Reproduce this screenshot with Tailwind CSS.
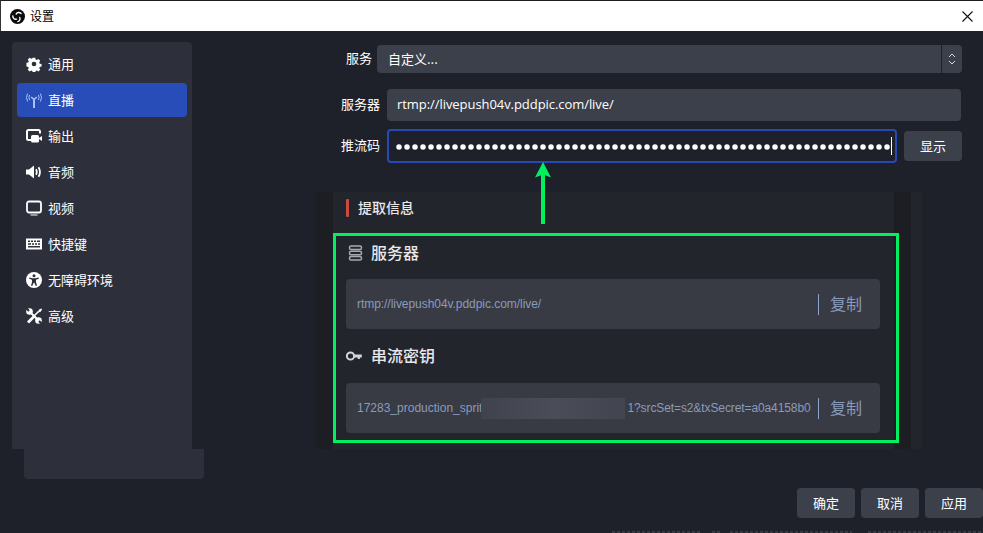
<!DOCTYPE html>
<html lang="zh">
<head>
<meta charset="utf-8">
<script src="https://cdn.jsdelivr.net/npm/@tailwindcss/browser@4"></script>
</head>
<body class="bg-[#1f212a]">
<div class="relative w-[983px] h-[533px] overflow-hidden flex flex-col bg-[#1f212a] text-white text-[13px] font-['Noto_Sans_CJK_SC','Noto_Sans',sans-serif]">
  <header class="h-[31px] shrink-0 bg-white border-t border-t-[#1f1f1f] border-l border-l-[#333] flex items-center text-black">
    <svg class="w-[15px] h-[15px] ml-[9px]" viewBox="0 0 16 16"><circle cx="8" cy="8" r="8" fill="#0c0c0c"/><g fill="none" stroke="#fff" stroke-linecap="round"><path d="M6.600 5.400A3.200 3.200 0 0 1 11.800 4.800" stroke-width="1.500"/><path d="M10.400 9A3.200 3.200 0 0 1 8.400 13.400" stroke-width="1.500"/><path d="M7 10.800A3.200 3.200 0 0 1 3 7.400" stroke-width="1.500"/></g></svg>
    <span class="ml-[5px] text-[12px]">设置</span>
    <svg class="w-[11px] h-[11px] ml-auto mr-[10px]" viewBox="0 0 11 11"><path d="M.5.5l10 10M10.500.5l-10 10" stroke="#111" stroke-width="1.100"/></svg>
  </header>
  <div class="flex-1 flex min-h-0">
    <aside class="w-[316px] shrink-0 pl-[12px] pt-[11px] flex flex-col">
      <nav class="w-[180px] h-[407px] bg-[#2d2f3b] rounded-t-[4px] px-[5px] pt-[5px] flex flex-col">
        <div class="h-[34px] mb-[2px] flex items-center pl-[9px] gap-[6px]">
          <svg class="w-[16px] h-[16px]" viewBox="0 0 16 16"><path fill="#fff" fill-rule="evenodd" d="M6.600 1h2.800l.4 2 1.300.6 1.800-1.100 2 2-1.100 1.800.6 1.300 2 .4v2.800l-2 .4-.6 1.300 1.100 1.800-2 2-1.800-1.100-1.300.6-.4 2H6.600l-.4-2-1.300-.6-1.800 1.100-2-2 1.100-1.800-.6-1.300-2-.4V6.600l2-.4.6-1.300-1.100-1.800 2-2 1.800 1.100 1.300-.6zM8 5.400a2.600 2.600 0 1 0 0 5.200a2.600 2.600 0 0 0 0-5.200z" transform="translate(.8 .8) scale(.9)"/></svg>
          <span class="pb-px">通用</span>
        </div>
        <div class="h-[34px] mb-[2px] flex items-center pl-[9px] gap-[6px] bg-[#284cb8] rounded-[4px]">
          <svg class="w-[16px] h-[16px]" viewBox="0 0 16 16" fill="none" stroke="#a9c1f5" stroke-width="1"><path d="M8 7v9" stroke-width="2"/><path d="M5.200 5l2.800 2.500L10.800 5" stroke-width="1.600"/><path d="M3.600 3Q2.200 5.500 3.600 8M1.600 1.500Q-.6 5.500 1.600 9.500M12.400 3Q13.800 5.500 12.400 8M14.400 1.500Q16.600 5.500 14.400 9.500"/></svg>
          <span class="pb-px">直播</span>
        </div>
        <div class="h-[34px] mb-[2px] flex items-center pl-[9px] gap-[6px]">
          <svg class="w-[16px] h-[16px]" viewBox="0 0 16 16" fill="none"><path d="M5 12H2.500A1.500 1.500 0 0 1 1 10.500v-7A1.500 1.500 0 0 1 2.500 2h10A1.500 1.500 0 0 1 14 3.500V5.500" stroke="#fff" stroke-width="2"/><rect x="5" y="7" width="8" height="7.500" rx="1.500" fill="#fff"/><path d="M13 10l3-2v5l-3-2z" fill="#fff"/></svg>
          <span class="pb-px">输出</span>
        </div>
        <div class="h-[34px] mb-[2px] flex items-center pl-[9px] gap-[6px]">
          <svg class="w-[16px] h-[16px]" viewBox="0 0 16 16" fill="none"><path d="M0 5.500h3L8 1.500v13l-5-4H0z" fill="#fff"/><path d="M10 5.200q1.600 2.800 0 5.600M12.500 3.200q3 4.800 0 9.600" stroke="#fff" stroke-width="1.800"/></svg>
          <span class="pb-px">音频</span>
        </div>
        <div class="h-[34px] mb-[2px] flex items-center pl-[9px] gap-[6px]">
          <svg class="w-[16px] h-[16px]" viewBox="0 0 16 16" fill="none"><rect x="1" y="1.500" width="14" height="11" rx="2" stroke="#fff" stroke-width="1.800"/><path d="M4.500 15h7" stroke="#fff" stroke-width="1"/></svg>
          <span class="pb-px">视频</span>
        </div>
        <div class="h-[34px] mb-[2px] flex items-center pl-[9px] gap-[6px]">
          <svg class="w-[16px] h-[16px]" viewBox="0 0 16 16"><path fill="#fff" fill-rule="evenodd" d="M0 2.500h16v11H0zM2 4.500v1.500h2V4.500zm3 0v1.500h2V4.500zm3 0v1.500h2V4.500zm3 0v1.500h3V4.500zM2 7.200v1.500h3V7.200zm4 0v1.500h2V7.200zm3 0v1.500h2V7.200zm3 0v1.500h2V7.200zM2 10v1.500h12V10z"/></svg>
          <span class="pb-px">快捷键</span>
        </div>
        <div class="h-[34px] mb-[2px] flex items-center pl-[9px] gap-[6px]">
          <svg class="w-[16px] h-[16px]" viewBox="0 0 16 16"><circle cx="8" cy="8" r="8" fill="#fff"/><circle cx="8" cy="3.800" r="1.500" fill="#2d2f3b"/><path d="M3.500 5.600l3 .6h3l3-.6.3 1.200-2.800 1v2.400l1 3.400-1.200.4-1.500-3.200h-.6l-1.500 3.200-1.200-.4 1-3.400V7.800l-2.800-1z" fill="#2d2f3b"/></svg>
          <span class="pb-px">无障碍环境</span>
        </div>
        <div class="h-[34px] flex items-center pl-[9px] gap-[6px]">
          <svg class="w-[16px] h-[16px]" viewBox="0 0 16 16" fill="none"><path d="M3.500 3.500l9 9" stroke="#fff" stroke-width="2"/><path d="M2 14.500L9 7.500" stroke="#fff" stroke-width="2.800"/><path d="M8 8l4.500-4.500" stroke="#fff" stroke-width="1.600"/><path d="M12 4l1-2.500 2.500-1 .5.500-1 2.500-2.500 1z" fill="#fff"/><circle cx="3.500" cy="3.500" r="3.300" fill="#fff"/><path d="M3 3L0 0" stroke="#2d2f3b" stroke-width="2.200"/><circle cx="12.500" cy="12.500" r="3.300" fill="#fff"/><path d="M13 13l3 3" stroke="#2d2f3b" stroke-width="2.200"/></svg>
          <span class="pb-px">高级</span>
        </div>
      </nav>
      <div class="w-[180px] h-[30px] ml-[12px] bg-[#2d2f3b] rounded-b-[4px]"></div>
    </aside>
    <main class="flex-1 min-w-0 flex flex-col">
      <div class="flex items-center h-[28px] mt-[14px] pl-[30px]">
        <span class="w-[31px] pb-[2px]">服务</span>
        <div class="w-[564px] h-[28px] bg-[#3c404b] rounded-l-[4px] flex items-center pl-[11px]">自定义...</div>
        <div class="w-[20px] h-[28px] ml-px bg-[#3c404b] rounded-r-[4px] flex items-center justify-center">
          <svg class="w-[8px] h-[14px]" viewBox="0 0 8 14" fill="none" stroke="#d8d8d8"><path d="M1 5l3-3 3 3M1 9l3 3 3-3"/></svg>
        </div>
      </div>
      <div class="flex items-center h-[32px] mt-[16px] pl-[25px]">
        <span class="w-[46px] pb-[2px]">服务器</span>
        <div class="w-[574px] h-[32px] bg-[#3c404b] rounded-[4px] flex items-center pl-[10px]">
          <span class="font-['Open_Sans',sans-serif] text-[13px] tracking-[-0.06px]">rtmp://livepush04v.pddpic.com/live/</span>
        </div>
      </div>
      <div class="flex items-center h-[34px] mt-[8px] pl-[25px]">
        <span class="w-[46px] pb-[2px]">推流码</span>
        <div class="w-[510px] h-[34px] border-2 border-[#2749b5] rounded-[4px] flex items-center pl-[7px] overflow-hidden">
          <svg class="shrink-0 mt-[2px]" width="494" height="6" viewBox="0 0 494 6"><line x1="3" y1="3" x2="492" y2="3" stroke="#fff" stroke-width="5.500" stroke-linecap="round" stroke-dasharray="0 8"/></svg>
          <span class="w-px h-[18px] bg-white ml-px shrink-0"></span>
        </div>
        <div class="w-[58px] h-[30px] ml-[7px] bg-[#3c404b] rounded-[4px] flex items-center justify-center">显示</div>
      </div>
      <section class="w-[606px] h-[257px] mt-[29px] bg-[#23252d] flex">
        <div class="w-[17px] bg-[#1c1e24] shrink-0"></div>
        <div class="w-[561px] shrink-0 flex flex-col">
          <div class="h-[41px] flex items-center pl-[13px] gap-[9px] pb-[10px]">
            <span class="w-[3px] h-[18px] bg-[#cb4a42] rounded-[1px]"></span>
            <span class="text-[14px] font-medium text-[#e8e8ea]">提取信息</span>
          </div>
          <div class="relative z-10 w-[566px] h-[210px] border-[3px] border-[#00f060] pl-[10px] pr-[16px] flex flex-col shrink-0">
            <div class="h-[34px] shrink-0 flex items-center gap-[7px]">
              <svg class="w-[17px] h-[16px] ml-[1px]" viewBox="0 0 16 16" fill="none" stroke="#a9abb0" stroke-width="1.500"><rect x="2" y="1" width="12" height="3.600" rx="1.600"/><rect x="2" y="6.200" width="12" height="3.600" rx="1.600"/><rect x="2" y="11.400" width="12" height="3.600" rx="1.600"/></svg>
              <span class="text-[16px] font-medium text-[#e8e8ea] pb-[3px]">服务器</span>
            </div>
            <div class="h-[50px] shrink-0 mt-[9px] bg-[#383a44] rounded-[4px] flex items-center pl-[11px] pr-[18px] font-['Liberation_Sans',sans-serif] text-[12px] tracking-[-0.05px] text-[#8a9cba]">
              <span>rtmp://livepush04v.pddpic.com/live/</span>
              <span class="w-px h-[21px] bg-[#8ba4cc] ml-auto"></span>
              <span class="ml-[11px] pb-[3px] text-[16px] font-['Noto_Sans_CJK_SC',sans-serif] tracking-normal text-[#8a9cba]">复制</span>
            </div>
            <div class="h-[34px] shrink-0 flex items-center gap-[9px] mt-[10px]">
              <svg class="w-[16px] h-[16px]" viewBox="0 0 16 16" fill="none"><circle cx="4.500" cy="8" r="3.600" stroke="#d4d5d8" stroke-width="2"/><path d="M8 6.600H15.800V9.400H13.900V11H11.700V9.400H8" fill="#d4d5d8"/></svg>
              <span class="text-[16px] font-medium text-[#e8e8ea] pb-[3px]">串流密钥</span>
            </div>
            <div class="h-[50px] shrink-0 mt-[10px] bg-[#383a44] rounded-[4px] flex items-center pl-[11px] pr-[18px] font-['Liberation_Sans',sans-serif] text-[12px] text-[#8a9cba]">
              <span class="whitespace-nowrap">17283_production_sprit</span>
              <span class="w-[144px] h-[21px] ml-[-1px] bg-linear-to-r from-[#40434d] via-[#4a4d58] to-[#42454f] shrink-0"></span>
              <span class="whitespace-nowrap ml-[2px] tracking-[-0.1px]">1?srcSet=s2&amp;txSecret=a0a4158b0</span>
              <span class="w-px h-[21px] bg-[#8ba4cc] ml-auto shrink-0"></span>
              <span class="ml-[11px] pb-[3px] text-[16px] font-['Noto_Sans_CJK_SC',sans-serif] text-[#8a9cba] shrink-0">复制</span>
            </div>
          </div>
        </div>
        <div class="w-[17px] bg-[#1c1e24] shrink-0"></div>
      </section>
      <div class="flex gap-[6px] mt-[39px] pl-[481px]">
        <div class="w-[58px] h-[30px] shrink-0 bg-[#3c404b] rounded-[4px] flex items-center justify-center">确定</div>
        <div class="w-[58px] h-[30px] shrink-0 bg-[#3c404b] rounded-[4px] flex items-center justify-center">取消</div>
        <div class="w-[58px] h-[30px] shrink-0 bg-[#3c404b] rounded-[4px] flex items-center justify-center">应用</div>
      </div>
    </main>
  </div>
  <svg class="absolute left-[535px] top-[162px] w-[16px] h-[62px] z-20" viewBox="0 0 16 62"><path d="M8 0L16 15.500 8 12.500 0 15.500z" fill="#00f060"/><rect x="6" y="11" width="4" height="51" fill="#00f060"/></svg>
  <svg class="absolute left-[612px] top-[530px] w-[371px] h-[3px]" viewBox="0 0 371 3"><path d="M0 2H90M100 2H108M118 2H240M256 2H371" stroke="#383a43" stroke-width="2" stroke-dasharray="3 2"/></svg>
</div>
</body>
</html>
